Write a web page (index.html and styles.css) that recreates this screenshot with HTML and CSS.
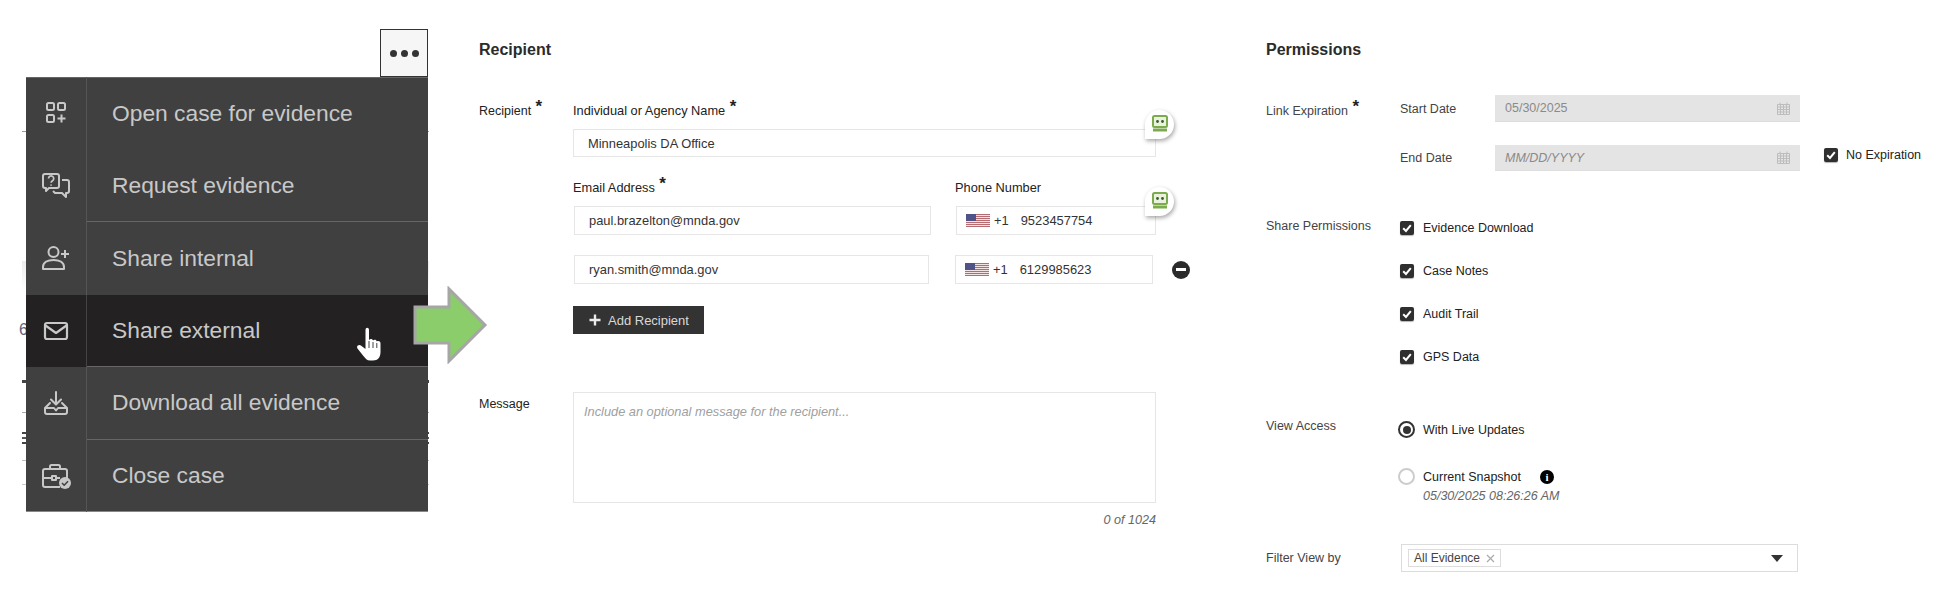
FILE: index.html
```html
<!DOCTYPE html>
<html lang="en">
<head>
<meta charset="utf-8">
<title>Share external</title>
<link rel="stylesheet" href="styles.css">
</head>
<body>
<div class="page">
  <section class="menu-col">
    <div class="backdrop">
      <i class="bl bl1"></i><i class="bl bl2"></i><i class="bl bl3"></i><i class="bl bl4"></i><i class="bl bl5"></i><i class="bl bl6"></i><i class="bl bl7"></i><i class="bl bl8"></i><i class="bl bl9"></i>
      <span class="peek">6</span>
    </div>
    <button class="more"><span></span><span></span><span></span></button>
    <ul class="menu">
      <li class="item"><span class="ic"><svg width="30" height="30" viewBox="0 0 30 30" fill="none" stroke="currentColor" stroke-width="2"><rect x="6" y="5" width="7" height="7" rx="1.5"/><rect x="17" y="5" width="7" height="7" rx="1.5"/><rect x="6" y="17" width="7" height="7" rx="1.5"/><path d="M20.5 16.5v8M16.5 20.5h8"/></svg></span><span class="tx">Open case for evidence</span></li>
      <li class="item sep"><span class="ic"><svg width="30" height="30" viewBox="0 0 30 30" fill="none" stroke="currentColor" stroke-width="2" stroke-linejoin="round"><path d="M2 5a2 2 0 0 1 2-2h12a2 2 0 0 1 2 2v10a2 2 0 0 1-2 2H8l-3 3v-3H4a2 2 0 0 1-2-2z"/><path d="M21 9h5a2 2 0 0 1 2 2v9a2 2 0 0 1-2 2h-1v4l-4-4h-7l-2-2"/><path d="M7.5 7.5a2.6 2.6 0 1 1 4 2.2c-.9.6-1.4 1-1.4 2M10.100 13.500v1.200" stroke-width="1.700"/></svg></span><span class="tx">Request evidence</span></li>
      <li class="item"><span class="ic"><svg width="30" height="30" viewBox="0 0 30 30" fill="none" stroke="currentColor" stroke-width="2"><circle cx="12.500" cy="9" r="5"/><path d="M2 26v-2c0-5 5-7 10.500-7S23 19 23 24v2z" stroke-linejoin="round"/><path d="M24 7v8M20 11h8"/></svg></span><span class="tx">Share internal</span></li>
      <li class="item active sep"><span class="ic"><svg width="30" height="30" viewBox="0 0 30 30" fill="none" stroke="currentColor" stroke-width="2.200" stroke-linejoin="round"><rect x="4" y="7" width="22" height="16" rx="2"/><path d="M4.500 9.500 15 17l10.500-7.500"/></svg></span><span class="tx">Share external</span></li>
      <li class="item sep"><span class="ic"><svg width="30" height="30" viewBox="0 0 30 30" fill="none" stroke="currentColor" stroke-width="2" stroke-linejoin="round" stroke-linecap="round"><path d="M15 4v12M10 11.500l5 5 5-5"/><path d="M9 15 4 20v4a2 2 0 0 0 2 2h18a2 2 0 0 0 2-2v-4l-5-5M4.500 20h8.500l2 2.500 2-2.500h8.500"/></svg></span><span class="tx">Download all evidence</span></li>
      <li class="item"><span class="ic"><svg width="32" height="30" viewBox="0 0 32 30" fill="none" stroke="currentColor" stroke-width="2" stroke-linejoin="round"><path d="M3 10a2 2 0 0 1 2-2h20a2 2 0 0 1 2 2v7M20 26H5a2 2 0 0 1-2-2V10M3 17h9M16 17h4M12 15h4v4h-4zM10 8V5.500A1.500 1.500 0 0 1 11.500 4h7A1.500 1.500 0 0 1 20 5.500V8"/><circle cx="25" cy="22" r="6" fill="currentColor" stroke="none"/><path d="M22 22l2.200 2.200 3.800-4" stroke="#404040" stroke-width="1.500"/></svg></span><span class="tx">Close case</span></li>
    </ul>
    <svg class="hand" width="28" height="36" viewBox="0 0 28 36"><path d="M9.500 3c0-3 3.500-3 3.500 0v10c1-1.500 3.500-1.500 4 .5 1-1.300 3.500-1 3.800 1 1.200-1 3.700-.5 3.700 2v8.500c0 5-2.500 8.500-7.500 8.500h-3C11 33.500 9.500 31.500 7 28.500L1.500 21.500c-1.600-2.500 1.700-4.700 3.700-2.700L9.500 22z" fill="#fff"/><path d="M13 14v7M17 15v6M20.800 16v5" stroke="#444" stroke-width="1" fill="none"/></svg>
  </section>

  <svg class="arrow" width="76" height="78" viewBox="0 0 76 78"><path d="M2 21h34V3l36 36-36 36V57H2z" fill="#8bcc6b" stroke="#a6a6a6" stroke-width="3"/></svg>

  <section class="recipient">
    <h2 class="title">Recipient</h2>
    <div class="form-row first">
      <div class="side-label">Recipient <b class="req">*</b></div>
      <div class="fields">
        <label class="label">Individual or Agency Name <b class="req">*</b></label>
        <div class="input name-input">Minneapolis DA Office<span class="bubble"><svg width="18" height="18" viewBox="0 0 18 18"><rect x="2" y="1" width="14" height="11" rx="1.500" fill="#e9f2df" stroke="#7bab4c" stroke-width="2"/><rect x="2" y="13.500" width="14" height="3" fill="#7bab4c"/><circle cx="6.500" cy="6.500" r="1.400" fill="#3f5a28"/><circle cx="11.500" cy="6.500" r="1.400" fill="#3f5a28"/></svg></span></div>
        <div class="cols head">
          <label class="label email-head">Email Address <b class="req">*</b></label>
          <label class="label">Phone Number</label>
        </div>
        <div class="contact one">
          <div class="input email">paul.brazelton@mnda.gov</div>
          <div class="input phone">
            <svg class="flag" width="24" height="13" viewBox="0 0 24 13"><rect width="24" height="13" fill="#f3e3e3"/><path d="M0 .5h24M0 2.500h24M0 4.500h24M0 6.500h24M0 8.500h24M0 10.500h24M0 12.500h24" stroke="#b56b72"/><rect width="10" height="7" fill="#4f5387"/></svg>
            <span class="cc">+1</span><span>9523457754</span>
            <span class="bubble"><svg width="18" height="18" viewBox="0 0 18 18"><rect x="2" y="1" width="14" height="11" rx="1.500" fill="#e9f2df" stroke="#7bab4c" stroke-width="2"/><rect x="2" y="13.500" width="14" height="3" fill="#7bab4c"/><circle cx="6.500" cy="6.500" r="1.400" fill="#3f5a28"/><circle cx="11.500" cy="6.500" r="1.400" fill="#3f5a28"/></svg></span>
          </div>
        </div>
        <div class="contact two">
          <div class="input email">ryan.smith@mnda.gov</div>
          <div class="input phone">
            <svg class="flag" width="24" height="13" viewBox="0 0 24 13"><rect width="24" height="13" fill="#f3e3e3"/><path d="M0 .5h24M0 2.500h24M0 4.500h24M0 6.500h24M0 8.500h24M0 10.500h24M0 12.500h24" stroke="#b56b72"/><rect width="10" height="7" fill="#4f5387"/></svg>
            <span class="cc">+1</span><span>6129985623</span>
          </div>
          <span class="minus"></span>
        </div>
        <button class="add"><svg width="12" height="12" viewBox="0 0 12 12"><path d="M6 .5v11M.5 6h11" stroke="#ececec" stroke-width="2.400"/></svg>Add Recipient</button>
      </div>
    </div>
    <div class="form-row msg">
      <div class="side-label">Message</div>
      <div class="fields">
        <div class="textarea">Include an optional message for the recipient...</div>
        <div class="counter">0 of 1024</div>
      </div>
    </div>
  </section>

  <section class="permissions">
    <h2 class="title">Permissions</h2>
    <div class="p-link">
      <div class="p-side">Link Expiration <b class="req">*</b></div>
      <div class="dates">
        <div class="date-row">
          <span class="date-label">Start Date</span>
          <div class="date-input">05/30/2025<svg class="cal" width="13" height="13" viewBox="0 0 13 13"><path d="M.5 2.500h12v10H.5zM.5 5h12M.5 7.500h12M.5 10h12M3.500 2.500v10M6.500 2.500v10M9.500 2.500v10M3 .5v2M10 .5v2" fill="none" stroke="#bdbdbd"/></svg></div>
        </div>
        <div class="date-row end">
          <span class="date-label">End Date</span>
          <div class="date-input ph">MM/DD/YYYY<svg class="cal" width="13" height="13" viewBox="0 0 13 13"><path d="M.5 2.500h12v10H.5zM.5 5h12M.5 7.500h12M.5 10h12M3.500 2.500v10M6.500 2.500v10M9.500 2.500v10M3 .5v2M10 .5v2" fill="none" stroke="#bdbdbd"/></svg></div>
          <span class="check no-exp"><span class="box"><svg width="14" height="14" viewBox="0 0 14 14"><path d="M3.200 7.200 6 10l4.800-5.800" fill="none" stroke="#fff" stroke-width="2"/></svg></span>No Expiration</span>
        </div>
      </div>
    </div>
    <div class="p-share">
      <div class="p-side">Share Permissions</div>
      <div class="checks">
        <span class="check"><span class="box"><svg width="14" height="14" viewBox="0 0 14 14"><path d="M3.200 7.200 6 10l4.800-5.800" fill="none" stroke="#fff" stroke-width="2"/></svg></span>Evidence Download</span>
        <span class="check"><span class="box"><svg width="14" height="14" viewBox="0 0 14 14"><path d="M3.200 7.200 6 10l4.800-5.800" fill="none" stroke="#fff" stroke-width="2"/></svg></span>Case Notes</span>
        <span class="check"><span class="box"><svg width="14" height="14" viewBox="0 0 14 14"><path d="M3.200 7.200 6 10l4.800-5.800" fill="none" stroke="#fff" stroke-width="2"/></svg></span>Audit Trail</span>
        <span class="check"><span class="box"><svg width="14" height="14" viewBox="0 0 14 14"><path d="M3.200 7.200 6 10l4.800-5.800" fill="none" stroke="#fff" stroke-width="2"/></svg></span>GPS Data</span>
      </div>
    </div>
    <div class="p-view">
      <div class="p-side">View Access</div>
      <div class="radios">
        <span class="radio-line"><span class="radio on"></span>With Live Updates</span>
        <span class="radio-line snap"><span class="radio"></span>Current Snapshot<span class="info">i</span></span>
        <span class="stamp">05/30/2025 08:26:26 AM</span>
      </div>
    </div>
    <div class="p-filter">
      <div class="p-side">Filter View by</div>
      <div class="select"><span class="tag">All Evidence<svg width="9" height="9" viewBox="0 0 9 9"><path d="M1 1l7 7M8 1 1 8" stroke="#aaa" stroke-width="1.200"/></svg></span><span class="caret"></span></div>
    </div>
  </section>
</div>
</body>
</html>
```
FILE: styles.css
```css
* { box-sizing: border-box; }
html, body { margin: 0; padding: 0; background: #fff; }
body { font-family: "Liberation Sans", Arial, sans-serif; font-size: 13px; color: #333; }
.page { position: relative; display: flex; width: 1944px; height: 599px; overflow: hidden; }
.title { margin: 40px 0 0; font-size: 16px; line-height: 20px; font-weight: 700; color: #2b2b2b; }
.req { font-size: 17px; line-height: 10px; font-weight: 700; color: #222; position: relative; top: -3px; left: 1px; }

/* left column */
.menu-col { position: relative; flex: 0 0 479px; padding: 29px 0 0 26px; }
.backdrop { position: absolute; inset: 0; z-index: 0; }
.bl { position: absolute; left: 22px; width: 407px; }
.bl1 { top: 131px; height: 1px; background: #999; }
.bl2 { top: 261px; height: 30px; background: linear-gradient(#ececec, #fff); }
.bl3 { top: 380px; height: 3px; background: #444; }
.bl4 { top: 412px; height: 1px; background: #aaa; }
.bl5 { top: 484px; height: 1px; background: #ccc; }
.bl6 { top: 432px; height: 2px; background: #444; }
.bl7 { top: 437px; height: 2px; background: #555; }
.bl8 { top: 442px; height: 2px; background: #444; }
.bl9 { top: 460px; height: 1px; background: #bbb; }
.peek { position: absolute; left: 19px; top: 320px; font-size: 16px; line-height: 20px; color: #5a6480; }
.more { position: relative; z-index: 1; display: flex; align-items: center; justify-content: center; gap: 4px; width: 48px; height: 48px; margin: 0 0 0 354px; padding: 0; background: #f6f6f6; border: 1px solid #333; }
.more span { width: 7px; height: 7px; border-radius: 50%; background: #333; }
.menu { position: relative; z-index: 1; margin: 0; padding: 0; list-style: none; width: 402px; height: 435px; background: #404040; box-shadow: inset 0 1px #666, inset 0 -1px #888; }
.item { display: flex; height: 72.5px; color: #c8c8c8; font-size: 22.8px; }
.ic { flex: 0 0 61px; display: flex; align-items: center; justify-content: center; border-right: 1px solid #555; }
.tx { flex: 1; display: flex; align-items: center; padding-left: 25px; }
.sep .tx { border-bottom: 1px solid #666; }
.item.active { background: #232122; }
.item.active .ic { border-right-color: #444; }
.hand { position: absolute; left: 356px; top: 327px; z-index: 2; }
.arrow { position: absolute; left: 413px; top: 286px; z-index: 3; }

/* recipient */
.recipient { flex: 0 0 787px; }
.form-row { display: flex; }
.form-row.first { margin-top: 43px; }
.form-row.msg { margin-top: 58px; }
.side-label { flex: 0 0 94px; font-size: 12.5px; line-height: 16px; color: #222; }
.msg .side-label { margin-top: 4px; }
.fields { width: 583px; }
.label { display: block; font-size: 12.8px; line-height: 16px; color: #222; }
.input { position: relative; flex: none; display: flex; align-items: center; height: 28px; padding-left: 14px; background: #fff; border: 1.500px solid #e6e6e6; font-size: 12.9px; color: #333; }
.name-input { margin-top: 10px; }
.cols { display: flex; margin-top: 23px; }
.email-head { width: 382px; }
.contact { display: flex; align-items: center; margin-left: 1px; }
.contact.one { margin-top: 10px; gap: 25px; }
.contact.two { margin-top: 20px; gap: 26px; }
.contact.one .email { width: 357px; }
.contact.two .email { width: 355px; }
.contact.one .phone { width: 200px; }
.contact.two .phone { width: 198px; }
.contact .input { height: 29px; }
.input.phone { padding-left: 9px; }
.flag { flex: none; margin-right: 4px; }
.cc { margin-right: 12px; }
.minus { position: relative; flex: none; width: 18px; height: 18px; margin-left: -7px; border-radius: 50%; background: #2b2b2b; }
.minus::after { content: ""; position: absolute; left: 4px; top: 7.500px; width: 10px; height: 3px; background: #fff; }
.bubble { position: absolute; right: -19px; top: -20.500px; display: flex; align-items: center; justify-content: center; width: 29px; height: 29px; background: #fff; border-radius: 50% 50% 50% 0; box-shadow: 1px 2px 4px rgba(0,0,0,.35); z-index: 2; }
.add { display: flex; align-items: center; gap: 7px; width: 131px; height: 28px; margin-top: 22px; padding: 0 0 0 16px; border: 0; background: #333; color: #d8d8d8; font: 13px "Liberation Sans", Arial, sans-serif; }
.textarea { height: 111px; padding: 11px 10px; border: 1.500px solid #e6e6e6; font-size: 12.8px; font-style: italic; color: #a0a0a0; }
.counter { margin-top: 9px; text-align: right; font-size: 12.6px; line-height: 16px; font-style: italic; color: #666; }

/* permissions */
.permissions { flex: 1; }
.p-side { flex: 0 0 134px; font-size: 12.5px; line-height: 16px; color: #444; }
.p-link { display: flex; margin-top: 35px; }
.p-link .p-side { margin-top: 8px; }
.dates { flex: 1; }
.date-row { display: flex; align-items: center; height: 27px; }
.date-row.end { height: 26px; margin-top: 23px; }
.date-label { flex: 0 0 95px; font-size: 12.5px; color: #444; }
.date-input { display: flex; align-items: center; justify-content: space-between; width: 305px; height: 100%; padding: 0 10px; background: #e4e4e4; border-bottom: 1px solid #ddd; font-size: 12.5px; color: #8a8a8a; }
.date-input.ph { font-style: italic; }
.check { display: flex; align-items: center; font-size: 12.5px; line-height: 16px; color: #222; }
.box { flex: none; width: 14px; height: 14px; margin-right: 9px; background: #2f2f2f; border-radius: 2px; box-shadow: 0 1px 1px rgba(0,0,0,.3); display: flex; }
.no-exp { margin: -6px 0 0 24px; white-space: nowrap; }
.no-exp .box { margin-right: 8px; }
.p-share { display: flex; margin-top: 47px; }
.checks { display: flex; flex-direction: column; gap: 27px; padding-top: 2px; }
.p-view { display: flex; margin-top: 52px; }
.p-view .p-side { margin-top: 1px; }
.radios { display: flex; flex-direction: column; margin-left: -2px; padding-top: 4px; }
.radio-line { display: flex; align-items: center; font-size: 12.5px; line-height: 16px; color: #222; }
.radio-line.snap { margin-top: 30px; }
.radio { flex: none; width: 17px; height: 17px; margin-right: 8px; border: 2px solid #ccc; border-radius: 50%; background: #fff; }
.radio.on { border-color: #333; position: relative; }
.radio.on::after { content: ""; position: absolute; inset: 2.500px; border-radius: 50%; background: #333; }
.info { width: 14px; height: 14px; margin-left: 19px; border-radius: 50%; background: #000; color: #fff; font: 700 11px/14px "Liberation Serif", serif; text-align: center; }
.stamp { margin: 3px 0 0 25px; font-size: 12.5px; line-height: 16px; font-style: italic; color: #666; }
.p-filter { display: flex; align-items: center; margin-top: 40px; }
.select { display: flex; align-items: center; justify-content: space-between; width: 397px; height: 28px; margin-left: 1px; padding: 0 14px 0 6px; border: 1px solid #dcdcdc; }
.tag { display: flex; align-items: center; gap: 6px; height: 18px; padding: 0 5px; border: 1px solid #ddd; font-size: 12px; color: #444; }
.caret { width: 0; height: 0; border: 6px solid transparent; border-top: 7px solid #333; border-bottom: 0; }
```
